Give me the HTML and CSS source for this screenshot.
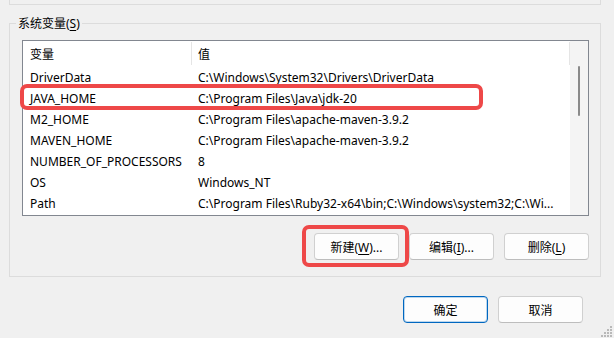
FILE: index.html
```html
<!DOCTYPE html>
<html lang="zh-CN">
<head>
<meta charset="utf-8">
<title>环境变量</title>
<link rel="stylesheet" href="styles.css">
</head>
<body>
<div class="top-box"></div>
<div class="group">
  <div class="legend">系统变量(<u>S</u>)</div>
  <div class="list">
    <div class="list-main">
      <div class="header">
        <div class="hcell">变量</div>
        <div class="hcell">值</div>
      </div>
      <div class="row"><div class="cell c1">DriverData</div><div class="cell c2">C:\Windows\System32\Drivers\DriverData</div></div>
      <div class="row hl"><div class="cell c1">JAVA_HOME</div><div class="cell c2">C:\Program Files\Java\jdk-20</div><span class="mark mark-row"></span></div>
      <div class="row"><div class="cell c1">M2_HOME</div><div class="cell c2">C:\Program Files\apache-maven-3.9.2</div></div>
      <div class="row"><div class="cell c1">MAVEN_HOME</div><div class="cell c2">C:\Program Files\apache-maven-3.9.2</div></div>
      <div class="row"><div class="cell c1">NUMBER_OF_PROCESSORS</div><div class="cell c2">8</div></div>
      <div class="row"><div class="cell c1">OS</div><div class="cell c2">Windows_NT</div></div>
      <div class="row"><div class="cell c1">Path</div><div class="cell c2">C:\Program Files\Ruby32-x64\bin;C:\Windows\system32;C:\Wi...</div></div>
    </div>
    <div class="scrollbar"><div class="thumb"></div></div>
  </div>
  <div class="actions">
    <span class="btn-wrap"><button class="btn">新建(<u>W</u>)...</button><span class="mark mark-btn"></span></span>
    <button class="btn">编辑(<u>I</u>)...</button>
    <button class="btn">删除(<u>L</u>)</button>
  </div>
</div>
<div class="footer">
  <button class="btn btn-default">确定</button>
  <button class="btn">取消</button>
</div>
<svg class="grip" width="12" height="12" viewBox="0 0 12 12">
  <rect x="9" y="0" width="2" height="2" fill="#b9b9b9"/>
  <rect x="6" y="3" width="2" height="2" fill="#b9b9b9"/>
  <rect x="9" y="3" width="2" height="2" fill="#b9b9b9"/>
  <rect x="3" y="6" width="2" height="2" fill="#b9b9b9"/>
  <rect x="6" y="6" width="2" height="2" fill="#b9b9b9"/>
  <rect x="9" y="6" width="2" height="2" fill="#b9b9b9"/>
  <rect x="0" y="9" width="2" height="2" fill="#b9b9b9"/>
  <rect x="3" y="9" width="2" height="2" fill="#b9b9b9"/>
  <rect x="6" y="9" width="2" height="2" fill="#b9b9b9"/>
  <rect x="9" y="9" width="2" height="2" fill="#b9b9b9"/>
</svg>
</body>
</html>
```
FILE: styles.css
```css
* { box-sizing: border-box; }
html, body { margin: 0; padding: 0; }
body {
  width: 614px;
  height: 338px;
  overflow: hidden;
  background: #f0f0f0;
  font-family: "Noto Sans", "Noto Sans CJK SC", sans-serif;
  font-size: 12px;
  color: #000;
  position: relative;
}
u { text-decoration: underline; text-underline-offset: 2px; }
.top-box {
  margin: 0 13px 0 9px;
  height: 5px;
  border: 1px solid #dcdcdc;
  border-top: none;
}
.group {
  margin: 18px 13px 0 9px;
  border: 1px solid #dcdcdc;
  padding: 0 11px 16px 12px;
}
.legend {
  width: max-content;
  margin: -9px 0 0 -6px;
  padding: 0 2px;
  line-height: 17px;
  height: 17px;
  background: #f0f0f0;
}
.list {
  margin-top: 8px;
  height: 176px;
  border: 1px solid #828790;
  background: #fff;
  display: flex;
}
.list-main { flex: 1; min-width: 0; }
.header, .row {
  display: grid;
  grid-template-columns: 169px 1fr;
}
.header { height: 25px; }
.hcell {
  border-right: 1px solid #e5e5e5;
  margin: 1px 0;
  height: 23px;
  padding-top: 3px;
  line-height: 20px;
  padding-left: 7px;
}
.hcell + .hcell { padding-left: 6px; }
.row { height: 21px; position: relative; }
.cell {
  white-space: nowrap;
  overflow: hidden;
  height: 21px;
  padding-top: 3px;
  line-height: 18px;
  padding-left: 7px;
}
.cell.c2 { padding-left: 6px; }
.scrollbar {
  width: 18px;
  background: #f4f4f4;
  padding-top: 25px;
}
.thumb {
  width: 2px;
  height: 50px;
  margin-left: 8px;
  background: #8a8a8a;
  border-radius: 1px;
}
.mark {
  position: absolute;
  border: 4px solid #ee4848;
  border-radius: 7px;
  pointer-events: none;
}
.mark-row { left: -3px; top: -3px; width: 463px; height: 26px; }
.actions {
  display: flex;
  justify-content: flex-end;
  gap: 10px;
  margin-top: 17px;
}
.btn-wrap { position: relative; display: flex; }
.mark-btn { left: -12px; top: -8px; right: -10px; bottom: -7px; }
.btn {
  width: 85px;
  height: 27px;
  margin: 0;
  padding: 0;
  font: inherit;
  color: #000;
  background: #fdfdfd;
  border: 1px solid #d0d0d0;
  border-bottom-color: #bdbdbd;
  border-radius: 4px;
}
.footer {
  display: flex;
  justify-content: flex-end;
  gap: 10px;
  margin-top: 19px;
  padding-right: 31px;
}
.btn-default {
  border: 1px solid #0067c0;
  box-shadow: inset 0 0 0 1px rgba(0, 103, 192, 0.25);
}
.grip { position: absolute; right: 1px; bottom: 0; }
```
